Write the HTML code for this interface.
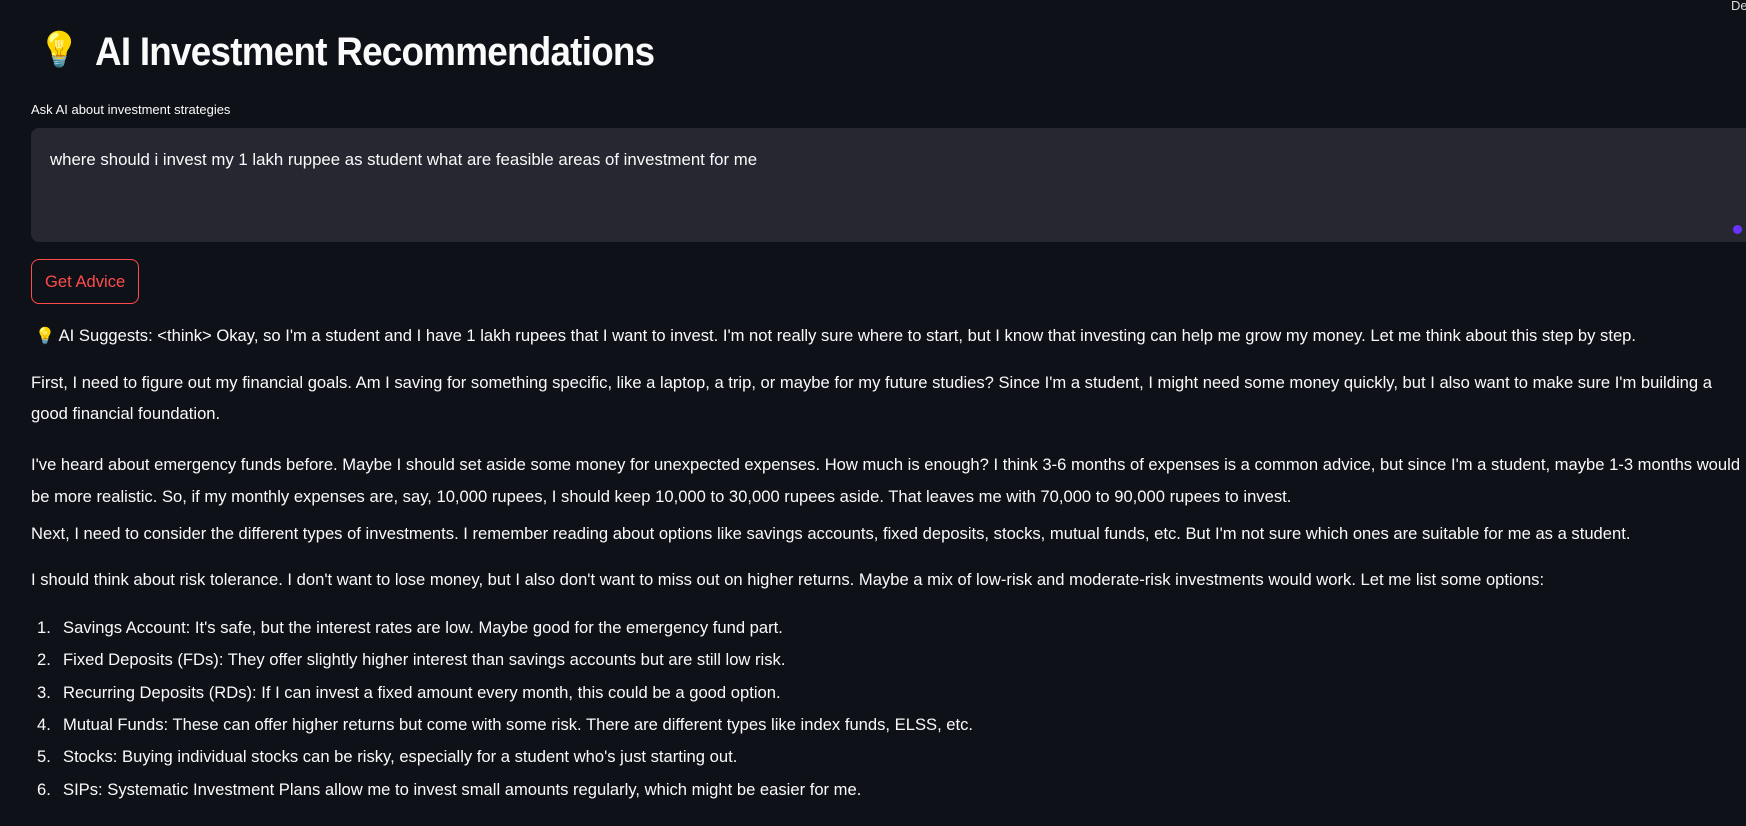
<!DOCTYPE html>
<html><head><meta charset="utf-8"><style>
html,body{margin:0;padding:0;background:#0e1117;width:1746px;height:826px;overflow:hidden;font-family:"Liberation Sans",sans-serif;color:#fafafa}
.a{position:absolute;white-space:nowrap}
.t{font-size:16.6px;line-height:20px}
h1{position:absolute;left:95px;top:30px;margin:0;font-size:40px;font-weight:bold;letter-spacing:-0.8px;white-space:nowrap;transform:scaleX(0.92);transform-origin:0 0}
</style></head><body>
<div class="a" style="left:1731px;top:-2px;font-size:13px;color:#ddd">De</div>
<div class="a" style="left:38px;top:30px;font-size:34px">💡</div>
<h1>AI Investment Recommendations</h1>
<div class="a" style="left:31px;top:102px;font-size:13px">Ask AI about investment strategies</div>
<div class="a" style="left:31px;top:128px;width:1740px;height:114px;background:#262730;border-radius:8px"></div>
<div class="a" style="left:50px;top:150px;font-size:16.8px;line-height:20px">where should i invest my 1 lakh ruppee as student what are feasible areas of investment for me</div>
<div class="a" style="left:1733px;top:225px;width:9px;height:9px;border-radius:50%;background:#6a32ff"></div>
<div class="a" style="left:31px;top:259px;width:108px;height:45px;border:1px solid #ff4b4b;border-radius:8px;box-sizing:border-box"></div>
<div class="a t" style="left:45px;top:272px;color:#ff4b4b">Get Advice</div>

<div class="a t" style="left:35px;top:326px"><span style="font-size:16px">💡</span> AI Suggests: &lt;think&gt; Okay, so I'm a student and I have 1 lakh rupees that I want to invest. I'm not really sure where to start, but I know that investing can help me grow my money. Let me think about this step by step.</div>
<div class="a t" style="left:31px;top:373px">First, I need to figure out my financial goals. Am I saving for something specific, like a laptop, a trip, or maybe for my future studies? Since I'm a student, I might need some money quickly, but I also want to make sure I'm building a</div>
<div class="a t" style="left:31px;top:404px">good financial foundation.</div>
<div class="a t" style="left:31px;top:455px">I've heard about emergency funds before. Maybe I should set aside some money for unexpected expenses. How much is enough? I think 3-6 months of expenses is a common advice, but since I'm a student, maybe 1-3 months would</div>
<div class="a t" style="left:31px;top:487px">be more realistic. So, if my monthly expenses are, say, 10,000 rupees, I should keep 10,000 to 30,000 rupees aside. That leaves me with 70,000 to 90,000 rupees to invest.</div>
<div class="a t" style="left:31px;top:524px">Next, I need to consider the different types of investments. I remember reading about options like savings accounts, fixed deposits, stocks, mutual funds, etc. But I'm not sure which ones are suitable for me as a student.</div>
<div class="a t" style="left:31px;top:570px">I should think about risk tolerance. I don't want to lose money, but I also don't want to miss out on higher returns. Maybe a mix of low-risk and moderate-risk investments would work. Let me list some options:</div>

<div class="a t" style="left:37px;top:618px">1.</div><div class="a t" style="left:63px;top:618px">Savings Account: It's safe, but the interest rates are low. Maybe good for the emergency fund part.</div>
<div class="a t" style="left:37px;top:650px">2.</div><div class="a t" style="left:63px;top:650px">Fixed Deposits (FDs): They offer slightly higher interest than savings accounts but are still low risk.</div>
<div class="a t" style="left:37px;top:683px">3.</div><div class="a t" style="left:63px;top:683px">Recurring Deposits (RDs): If I can invest a fixed amount every month, this could be a good option.</div>
<div class="a t" style="left:37px;top:715px">4.</div><div class="a t" style="left:63px;top:715px">Mutual Funds: These can offer higher returns but come with some risk. There are different types like index funds, ELSS, etc.</div>
<div class="a t" style="left:37px;top:747px">5.</div><div class="a t" style="left:63px;top:747px">Stocks: Buying individual stocks can be risky, especially for a student who's just starting out.</div>
<div class="a t" style="left:37px;top:780px">6.</div><div class="a t" style="left:63px;top:780px">SIPs: Systematic Investment Plans allow me to invest small amounts regularly, which might be easier for me.</div>
</body></html>
